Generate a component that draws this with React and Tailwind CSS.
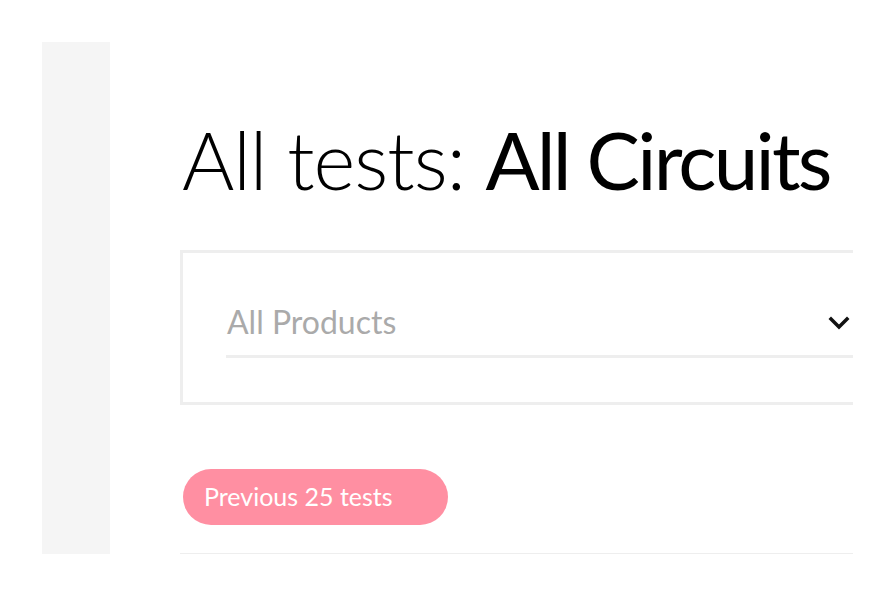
import React from 'react';

export default function App() {
  return (
    <div className="w-[894px] h-[596px] bg-white flex pt-[42px] pl-[42px] font-['Lato',sans-serif] overflow-hidden">
      <aside className="w-[68px] h-[512px] bg-[#f5f5f5] shrink-0" />

      <main className="ml-[70px] w-[673px] overflow-hidden">
        <h1 className="mt-[77px] ml-[2px] text-[80px] leading-[80px] text-black whitespace-nowrap tracking-[-1px]">
          <span className="font-light">All tests: </span>
          <span className="font-normal tracking-[-2.8px]">All Circuits</span>
        </h1>

        <div className="mt-[51px] w-[700px] h-[155px] border-[3px] border-[#eeeeee] pl-[43px] pt-[48px]">
          <div className="w-[627px] border-b-[3px] border-[#eeeeee] flex items-center justify-between pb-[12px]">
            <span className="text-[32px] leading-[42px] text-[#aaaaaa] font-normal ml-[1px]">All Products</span>
            <svg
              className="mr-[3px] mt-[2px]"
              width="22"
              height="14"
              viewBox="0 0 22 14"
              fill="none"
              stroke="#111"
              strokeWidth="3.5"
              strokeLinecap="square"
            >
              <path d="M3 3l8 8 8-8" />
            </svg>
          </div>
        </div>

        <button className="mt-[64px] ml-[3px] w-[265px] h-[56px] rounded-full bg-[#ff8fa2] text-white text-[25px] text-left pl-[21px]">
          Previous 25 tests
        </button>

        <div className="mt-[28px] h-px bg-[#eeeeee]" />
      </main>
    </div>
  );
}
